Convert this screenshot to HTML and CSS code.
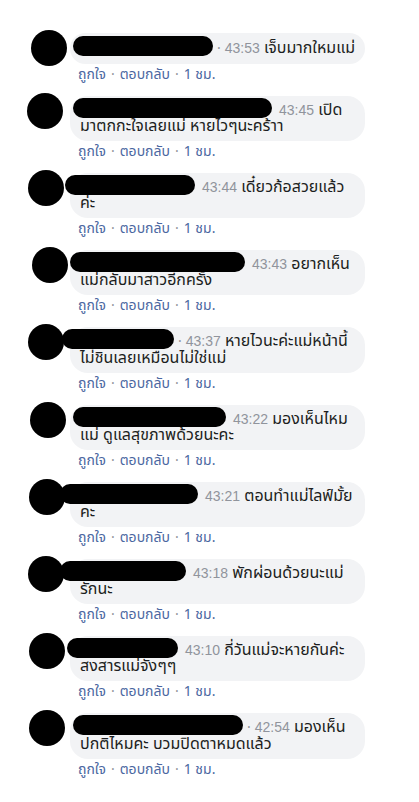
FILE: index.html
```html
<!DOCTYPE html>
<html lang="th">
<head>
<meta charset="utf-8">
<title>Comments</title>
<link rel="stylesheet" href="styles.css">
</head>
<body>
<div class="list">

  <div class="comment single">
    <div class="avatar" style="--ax:2px"></div>
    <div class="body">
      <div class="bubble"><span class="name" style="--x:-7px;--w:140px"></span><span class="sep">·</span><span class="time">43:53</span> เจ็บมากใหมแม่</div>
      <div class="actions"><span class="link">ถูกใจ</span><span class="dot">·</span><span class="link">ตอบกลับ</span><span class="dot">·</span><span class="ago">1 ชม.</span></div>
    </div>
  </div>

  <div class="comment">
    <div class="avatar" style="--ax:-2px"></div>
    <div class="body">
      <div class="bubble"><span class="name" style="--x:-7px;--w:199px"></span><span class="time">43:45</span> เปิด<br>มาตกกะใจเลยแม่ หายไวๆนะคร้าา</div>
      <div class="actions"><span class="link">ถูกใจ</span><span class="dot">·</span><span class="link">ตอบกลับ</span><span class="dot">·</span><span class="ago">1 ชม.</span></div>
    </div>
  </div>

  <div class="comment">
    <div class="avatar" style="--ax:-1px"></div>
    <div class="body">
      <div class="bubble"><span class="name" style="--x:-15px;--w:130px"></span><span class="time">43:44</span> เดี๋ยวก้อสวยแล้ว<br>ค่ะ</div>
      <div class="actions"><span class="link">ถูกใจ</span><span class="dot">·</span><span class="link">ตอบกลับ</span><span class="dot">·</span><span class="ago">1 ชม.</span></div>
    </div>
  </div>

  <div class="comment">
    <div class="avatar" style="--ax:3px"></div>
    <div class="body">
      <div class="bubble"><span class="name" style="--x:-10px;--w:175px"></span><span class="time">43:43</span> อยากเห็น<br>แม่กลับมาสาวอีกครั้ง</div>
      <div class="actions"><span class="link">ถูกใจ</span><span class="dot">·</span><span class="link">ตอบกลับ</span><span class="dot">·</span><span class="ago">1 ชม.</span></div>
    </div>
  </div>

  <div class="comment">
    <div class="avatar" style="--ax:-1px"></div>
    <div class="body">
      <div class="bubble"><span class="name" style="--x:-18px;--w:112px"></span><span class="sep">·</span><span class="time">43:37</span> หายไวนะค่ะแม่หน้านี้<br>ไม่ชินเลยเหมือนไม่ใช่แม่</div>
      <div class="actions"><span class="link">ถูกใจ</span><span class="dot">·</span><span class="link">ตอบกลับ</span><span class="dot">·</span><span class="ago">1 ชม.</span></div>
    </div>
  </div>

  <div class="comment">
    <div class="avatar" style="--ax:1px"></div>
    <div class="body">
      <div class="bubble"><span class="name" style="--x:-7px;--w:153px"></span><span class="time">43:22</span> มองเห็นไหม<br>แม่ ดูแลสุขภาพด้วยนะคะ</div>
      <div class="actions"><span class="link">ถูกใจ</span><span class="dot">·</span><span class="link">ตอบกลับ</span><span class="dot">·</span><span class="ago">1 ชม.</span></div>
    </div>
  </div>

  <div class="comment">
    <div class="avatar" style="--ax:0px"></div>
    <div class="body">
      <div class="bubble"><span class="name" style="--x:-20px;--w:138px"></span><span class="time">43:21</span> ตอนทำแม่ไลฟ์มั้ย<br>คะ</div>
      <div class="actions"><span class="link">ถูกใจ</span><span class="dot">·</span><span class="link">ตอบกลับ</span><span class="dot">·</span><span class="ago">1 ชม.</span></div>
    </div>
  </div>

  <div class="comment">
    <div class="avatar" style="--ax:-1px"></div>
    <div class="body">
      <div class="bubble"><span class="name" style="--x:-20px;--w:126px"></span><span class="time">43:18</span> พักผ่อนด้วยนะแม่<br>รักนะ</div>
      <div class="actions"><span class="link">ถูกใจ</span><span class="dot">·</span><span class="link">ตอบกลับ</span><span class="dot">·</span><span class="ago">1 ชม.</span></div>
    </div>
  </div>

  <div class="comment">
    <div class="avatar" style="--ax:0px"></div>
    <div class="body">
      <div class="bubble"><span class="name" style="--x:-13px;--w:111px"></span><span class="time">43:10</span> กี่วันแม่จะหายกันค่ะ<br>สงสารแม่จังๆๆ</div>
      <div class="actions"><span class="link">ถูกใจ</span><span class="dot">·</span><span class="link">ตอบกลับ</span><span class="dot">·</span><span class="ago">1 ชม.</span></div>
    </div>
  </div>

  <div class="comment">
    <div class="avatar" style="--ax:0px"></div>
    <div class="body">
      <div class="bubble"><span class="name" style="--x:-7px;--w:170px"></span><span class="sep">·</span><span class="time">42:54</span> มองเห็น<br>ปกติไหมคะ บวมปิดตาหมดแล้ว</div>
      <div class="actions"><span class="link">ถูกใจ</span><span class="dot">·</span><span class="link">ตอบกลับ</span><span class="dot">·</span><span class="ago">1 ชม.</span></div>
    </div>
  </div>

</div>
</body>
</html>
```

FILE: styles.css
```css
html, body {
  margin: 0;
  padding: 0;
  background: #ffffff;
}

body {
  font-family: Tahoma, "Noto Sans Thai", "Noto Sans Thai UI", "Liberation Sans", sans-serif;
  color: #1c1e21;
  width: 419px;
  height: 802px;
  overflow: hidden;
}

.list {
  display: flex;
  flex-direction: column;
  gap: 10px;
  padding: 30px 0 0 29px;
}

.comment {
  display: flex;
  align-items: flex-start;
  gap: 5px;
}

.avatar {
  flex: none;
  width: 36px;
  height: 36px;
  border-radius: 50%;
  background: #000;
  transform: translateX(var(--ax, 0px));
}

.body {
  display: flex;
  flex-direction: column;
  align-items: flex-start;
  padding-top: 3px;
}

.bubble {
  min-width: 275px;
  box-sizing: content-box;
  background: #f2f3f5;
  border-radius: 18px;
  padding: 6px 10px 7px;
  font-size: 16px;
  line-height: 16px;
  white-space: nowrap;
}

.single .bubble {
  padding: 7px 10px 7px;
}

.name {
  position: relative;
  z-index: 1;
  display: inline-block;
  vertical-align: top;
  width: var(--w);
  height: 20px;
  margin: -4px 7px 0 var(--x);
  background: #000;
  border-radius: 10px;
}

.sep {
  color: #90949c;
  font-size: 14px;
  margin: 0 4px 0 -3px;
}

.time {
  color: #90949c;
  font-size: 14px;
  font-family: "Liberation Sans", Arial, sans-serif;
}

.actions {
  display: flex;
  align-items: center;
  padding: 3px 0 0 8px;
  font-size: 14px;
  line-height: 16px;
  color: #4b67a1;
}

.dot {
  color: #90949c;
  margin: 0 5px;
}

.ago {
  color: #4b67a1;
}
```
